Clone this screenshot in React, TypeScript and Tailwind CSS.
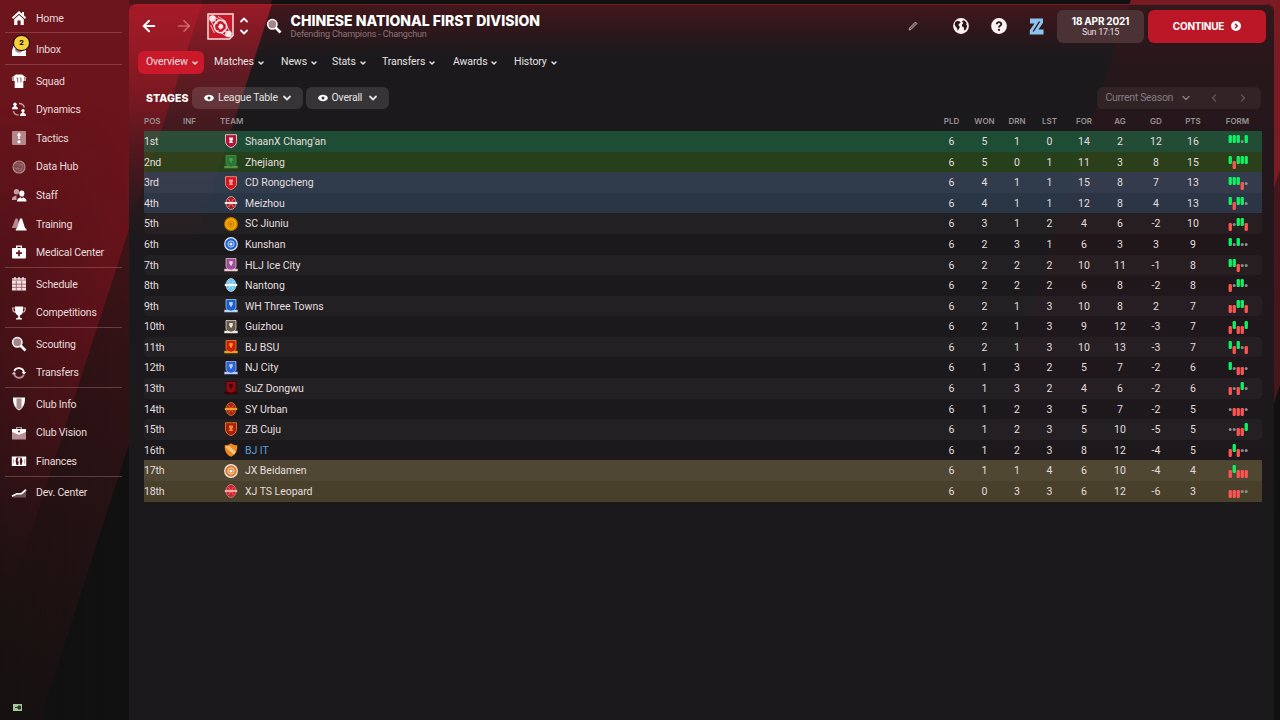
import React from "react";
import { ArrowLeft, ArrowRight, ChevronDown, ChevronLeft, ChevronRight, ChevronUp } from "lucide-react";

/* ── Sidebar icons ── */
const icons: Record<string, React.ReactNode> = {
  home: (
    <>
      <path d="M8 1 .8 7.600l1.300 1.400L8 3.700 13.900 9l1.300-1.400L13 5.600V2h-2v1.700z" />
      <path d="M3.200 9.200 8 5l4.800 4.200V15H9.600v-4.500H6.400V15H3.200z" />
    </>
  ),
  inbox: (
    <>
      <path d="M1 9.500 3 4h10l2 5.500V15H1z" />
      <path d="M4 9C5 12.500 11 12.500 12 9L11 5H5z" fill="#a98287" />
    </>
  ),
  squad: (
    <>
      <path d="M5 1.500h6L15.300 4.500 14.500 8H12.300v7H3.700V8H1.500L.7 4.500z" />
      <path d="M.7 4.500 3 3v5H1.500zM15.300 4.500 13 3v5h1.500z" fill="#b9959a" />
      <path d="M5.500 5h1.200v4.500M8.700 5h1.200v4.500" stroke="#8e4a51" strokeWidth=".9" fill="none" />
    </>
  ),
  dynamics: (
    <>
      <circle cx="4" cy="3.200" r="1.700" />
      <path d="M1 8.300c0-2 1-2.600 2.300-3V4h1.400v1.300C6 5.700 7 6.300 7 8.300z" />
      <circle cx="12" cy="9.700" r="1.700" />
      <path d="M9 15c0-2 1-2.800 2.300-3.200v-1.300h1.400v1.300C14 12.200 15 13 15 15z" />
      <path d="M8 2.500q4.500 0 5.300 4M2.500 10q.5 4 5 4" stroke="#c9a4a8" strokeWidth="1.300" fill="none" />
    </>
  ),
  tactics: (
    <>
      <rect x="1" y="1" width="14" height="14" rx="1" fill="#b4858a" />
      <circle cx="8" cy="11.800" r="1.600" />
      <path d="M8 2.500 10.300 5.500H8.800V9H7.200V5.500H5.700z" />
    </>
  ),
  data: (
    <>
      <circle cx="8" cy="8" r="6" fill="#83484f" stroke="#b78d92" strokeWidth="1.100" />
      <path d="M4 4.500 12 6l-2 6-5-2 6-5M3 9l8 1" stroke="#a5767c" strokeWidth=".6" fill="none" />
    </>
  ),
  staff: (
    <>
      <g fill="#c39da1">
        <circle cx="5.500" cy="4.800" r="2.700" />
        <path d="M.8 13c0-3 2-4 4.700-4.500V13z" />
      </g>
      <ellipse cx="10.800" cy="6.500" rx="2.600" ry="3.100" />
      <path d="M6 14.500c0-2.700 1.500-3.300 3.500-4.200l1.300 1.200 1.300-1.200c2 .9 3.400 1.500 3.400 4.200z" />
    </>
  ),
  training: (
    <>
      <path d="M4.500 2.500h2l3 9.500H.8z" fill="#b9868b" />
      <path d="M9 2.500h2l3 9.500 1.500 1v1.500H4.800V13L6.200 12z" />
    </>
  ),
  medical: (
    <>
      <path d="M5 4V1.500h6V4h3q1 0 1 1v8.500q0 1-1 1H2q-1 0-1-1V5q0-1 1-1zM6.300 4h3.400V2.700H6.300z" fillRule="evenodd" />
      <path d="M8 6.200v6M5 9.200h6" stroke="#6c151c" strokeWidth="1.800" />
    </>
  ),
  schedule: (
    <>
      <path d="M1 2h14v3H1z" fill="#c7a3a6" />
      <path d="M1 5h14v9.500H1z" fill="#f2e3e4" />
      <path d="M1 8.200h14M1 11.300h14M5.300 5v9.500M10.700 5v9.500" stroke="#9a5b62" strokeWidth=".9" />
      <path d="M4 1v2.500M8 1v2.500M12 1v2.500" stroke="#fff" strokeWidth="1.200" />
    </>
  ),
  trophy: (
    <>
      <path d="M4 1.500h8V6c0 2.800-1.800 4-3.200 4.400v2.100l2.200 1v1H5v-1l2.200-1v-2.100C5.800 10 4 8.800 4 6z" />
      <path d="M4 3H1.700c0 3 .8 4.300 3 4.300M12 3h2.300c0 3-.8 4.300-3 4.300" stroke="#d6b4b7" strokeWidth="1.200" fill="none" />
    </>
  ),
  scout: (
    <>
      <path d="m9.500 9.500 5 5" stroke="#fff" strokeWidth="2.600" />
      <circle cx="6.300" cy="6.300" r="4.700" fill="#a5858a" stroke="#fff" strokeWidth="1.500" />
    </>
  ),
  transfers: (
    <>
      <path d="M3.200 6a5.300 5.300 0 0 1 9.800 1" stroke="#fff" strokeWidth="1.700" fill="none" />
      <path d="M12.800 10a5.300 5.300 0 0 1-9.800-1" stroke="#b98c91" strokeWidth="1.700" fill="none" />
      <path d="M10.600 7h4.800L13 9.800z" />
      <path d="M.6 9.200 3 6.400l2.400 2.800z" fill="#d5b8bb" />
    </>
  ),
  club: (
    <>
      <path d="M2 1.500h12c.2 6-1.500 10.500-6 13-4.500-2.500-6.200-7-6-13z" />
      <path d="M5.500 2.500h5V12L8 13.500 5.500 12z" fill="#a98d90" />
    </>
  ),
  vision: (
    <>
      <path d="M5 4V2h6v2h4v10.500H1V4zm1.300 0h3.400V3H6.300z" fillRule="evenodd" fill="#b79094" />
      <path d="M1 4h14v3L8 9.800 1 7z" />
      <circle cx="8" cy="6.500" r="1" fill="#4c1318" />
    </>
  ),
  finances: (
    <>
      <path d="M.8 3.500h14.400v9.500H.8z" />
      <path d="M5.500 4.500h5L11.500 8l-1 4h-5l-1-4z" fill="#431217" />
      <path d="M7.500 4.500h2L8.700 8l.6 4h-2l.5-3.500-1.300-.3z" fill="#fff" />
      <path d="M2.300 6v4.500M13.700 6v4.500" stroke="#b79094" strokeWidth=".9" />
    </>
  ),
  dev: (
    <>
      <path d="M1 12.500h14V6L11 9.300 7 9.500z" fill="#6e5355" />
      <path d="M1 11.300 6 8.800l4.500-.2L15 4.800" stroke="#fff" strokeWidth="1.800" fill="none" />
    </>
  ),
};

const menu = [
  [["home", "Home"]],
  [["inbox", "Inbox"]],
  [
    ["squad", "Squad"],
    ["dynamics", "Dynamics"],
    ["tactics", "Tactics"],
    ["data", "Data Hub"],
    ["staff", "Staff"],
    ["training", "Training"],
    ["medical", "Medical Center"],
  ],
  [
    ["schedule", "Schedule"],
    ["trophy", "Competitions"],
  ],
  [
    ["scout", "Scouting"],
    ["transfers", "Transfers"],
  ],
  [
    ["club", "Club Info"],
    ["vision", "Club Vision"],
    ["finances", "Finances"],
  ],
  [["dev", "Dev. Center"]],
];

const tabs = [
  { label: "Overview", width: "w-[66px] mr-0.5" },
  { label: "Matches", width: "w-[67px]" },
  { label: "News", width: "w-[51px]" },
  { label: "Stats", width: "w-[50px]" },
  { label: "Transfers", width: "w-[71px]" },
  { label: "Awards", width: "w-[61px]" },
  { label: "History", width: "w-[60px]" },
];

/* ── Club crests ── */
type CrestShape = "shield" | "round" | "oval" | "base" | "sash";

interface Team {
  pos: string;
  name: string;
  crest: [CrestShape, string, string];
  stats: number[];
  form: string;
}

const teams: Team[] = [
  { pos: "1st", name: "ShaanX Chang'an", crest: ["shield", "#b5123a", "#f3e6ea"], stats: [6, 5, 1, 0, 14, 2, 12, 16], form: "WWWDW" },
  { pos: "2nd", name: "Zhejiang", crest: ["base", "#1f7a3c", "#5f9440"], stats: [6, 5, 0, 1, 11, 3, 8, 15], form: "WLWWW" },
  { pos: "3rd", name: "CD Rongcheng", crest: ["shield", "#d8141c", "#f6a096"], stats: [6, 4, 1, 1, 15, 8, 7, 13], form: "WWWLD" },
  { pos: "4th", name: "Meizhou", crest: ["oval", "#b01c22", "#f4e4e0"], stats: [6, 4, 1, 1, 12, 8, 4, 13], form: "WLWWD" },
  { pos: "5th", name: "SC Jiuniu", crest: ["round", "#f2a900", "#c47a00"], stats: [6, 3, 1, 2, 4, 6, -2, 10], form: "LDWWL" },
  { pos: "6th", name: "Kunshan", crest: ["round", "#1f5fd0", "#dce8fb"], stats: [6, 2, 3, 1, 6, 3, 3, 9], form: "WDWDD" },
  { pos: "7th", name: "HLJ Ice City", crest: ["base", "#9a4f9c", "#f2c8d4"], stats: [6, 2, 2, 2, 10, 11, -1, 8], form: "WWLDD" },
  { pos: "8th", name: "Nantong", crest: ["oval", "#6cc4ee", "#eef8fd"], stats: [6, 2, 2, 2, 6, 8, -2, 8], form: "LDWWD" },
  { pos: "9th", name: "WH Three Towns", crest: ["base", "#1c5fc8", "#b9d6fa"], stats: [6, 2, 1, 3, 10, 8, 2, 7], form: "LLWWL" },
  { pos: "10th", name: "Guizhou", crest: ["base", "#6b5a4c", "#ece8e2"], stats: [6, 2, 1, 3, 9, 12, -3, 7], form: "LWLLW" },
  { pos: "11th", name: "BJ BSU", crest: ["base", "#d01a12", "#f0a018"], stats: [6, 2, 1, 3, 10, 13, -3, 7], form: "WLWDL" },
  { pos: "12th", name: "NJ City", crest: ["base", "#2a62d8", "#b4ccf8"], stats: [6, 1, 3, 2, 5, 7, -2, 6], form: "WDLLD" },
  { pos: "13th", name: "SuZ Dongwu", crest: ["base", "#8e0c10", "#3a0406"], stats: [6, 1, 3, 2, 4, 6, -2, 6], form: "LDLWD" },
  { pos: "14th", name: "SY Urban", crest: ["oval", "#b3201c", "#e8a02c"], stats: [6, 1, 2, 3, 5, 7, -2, 5], form: "DLLLD" },
  { pos: "15th", name: "ZB Cuju", crest: ["shield", "#b41a14", "#e0902c"], stats: [6, 1, 2, 3, 5, 10, -5, 5], form: "DDLLW" },
  { pos: "16th", name: "BJ IT", crest: ["sash", "#f08a1c", "#fbe0b4"], stats: [6, 1, 2, 3, 8, 12, -4, 5], form: "LWLDD" },
  { pos: "17th", name: "JX Beidamen", crest: ["round", "#e07a2c", "#f4ece6"], stats: [6, 1, 1, 4, 6, 10, -4, 4], form: "LWLLL" },
  { pos: "18th", name: "XJ TS Leopard", crest: ["oval", "#d0202c", "#f0a8a4"], stats: [6, 0, 3, 3, 6, 12, -6, 3], form: "LLLDD" },
];

const rowColors: Record<number, string> = {
  0: "bg-[#217047]/60",
  1: "bg-[#2f5a1a]/60",
  2: "bg-[#415974]/55",
  3: "bg-[#344e69]/55",
  16: "bg-[#837649]/50",
  17: "bg-[#756839]/50",
};

const columns = ["PLD", "WON", "DRN", "LST", "FOR", "AG", "GD", "PTS"];
const gridCols =
  "grid grid-cols-[39px_37px_25px_1fr_33px_33px_32px_33px_36px_36px_36px_38px_50px] items-center";

function Crest({ crest }: { crest: Team["crest"] }) {
  const [shape, main, trim] = crest;
  return (
    <svg viewBox="0 0 14 14" className="size-[14px]">
      {shape === "shield" && (
        <>
          <path d="M1.500 .7h11v7c0 3-2.500 4.800-5.500 6-3-1.200-5.500-3-5.500-6z" fill={main} stroke={trim} strokeWidth=".8" />
          <path d="M5 3.500h4v2.300l-.8.700L9 9H5l.8-2.500-.8-.7z" fill={trim} />
        </>
      )}
      {shape === "sash" && (
        <>
          <path d="M.7 2.300C3 2.300 5.500 1.500 7 .2c1.500 1.300 4 2.100 6.300 2.100C13.500 8 11.500 12 7 13.800 2.500 12 .5 8 .7 2.300z" fill={main} />
          <path d="M2 3.500 10.500 11M4.500 3.300l7 6.200" stroke={trim} strokeWidth="1.100" />
        </>
      )}
      {shape === "round" && (
        <>
          <circle cx="7" cy="7" r="6.900" fill={trim} />
          <circle cx="7" cy="7" r="5.700" fill={main} />
          <circle cx="7" cy="7" r="3.100" fill="none" stroke={trim} strokeWidth=".9" />
          <circle cx="7" cy="7" r="1.600" fill={trim} />
        </>
      )}
      {shape === "oval" && (
        <>
          <ellipse cx="7" cy="7" rx="5" ry="6.500" fill={main} stroke={trim} strokeWidth=".6" />
          <path d="m4.500 3 5 8M9.500 3l-5 8" stroke={trim} strokeWidth=".5" />
          <path d="M.8 5.900h12.400v2.200H.8z" fill={trim} />
        </>
      )}
      {shape === "base" && (
        <>
          <path d="M2 .5h10v7.800c0 2-2 3.200-5 4.400-3-1.200-5-2.400-5-4.400z" fill={main} stroke={trim} strokeWidth=".7" />
          <path d="M5.300 3h3.400v3H8v1.500H6V6h-.7z" fill={trim} />
          <path d="M.3 10.800h3l3.700 1 3.700-1h3v2.500H.3z" fill={trim} />
        </>
      )}
    </svg>
  );
}

function Form({ form }: { form: string }) {
  return (
    <svg viewBox="0 0 20 20" className="ml-4 h-5 w-5">
      {form.split("").map((r, i) => {
        const x = i * 4 + 0.6;
        if (r === "D") return <circle key={i} cx={x + 1.6} cy="10.500" r="1.500" fill="#918c8f" />;
        return (
          <rect key={i} x={x} y={r === "W" ? 4 : 9} width="3.300" height="8" rx="1.200" fill={r === "W" ? "#10f064" : "#fb5453"} />
        );
      })}
    </svg>
  );
}

function Sidebar() {
  return (
    <nav className="relative w-[129px] shrink-0 pt-[3.600px]">
      {menu.map((group, g) => (
        <div key={g}>
          {g > 0 && <div className="ml-[5px] h-[2.900px] w-[117px] border-t border-[#b06a70]/45" />}
          {group.map(([icon, label]) => (
            <div key={label} className="flex h-[28.600px] items-center pl-[11px]">
              <div className="relative">
                <svg viewBox="0 0 16 16" className="size-4" fill="#fff">
                  {icons[icon]}
                </svg>
                {icon === "inbox" && (
                  <span className="absolute -top-[6px] left-[2px] flex h-4 w-[17px] items-center justify-center rounded-full border-[1.500px] border-black bg-[#f6cf3c] text-[8px] font-bold text-black">
                    2
                  </span>
                )}
              </div>
              <span className="ml-[9px] pt-0.5 tracking-[-0.170px] whitespace-nowrap text-[#e9dcdd]">{label}</span>
            </div>
          ))}
        </div>
      ))}
      <svg viewBox="0 0 9 7" className="absolute top-[704px] left-[12.500px] h-[7px] w-[9px]">
        <path d="M0 0h9v7H0z" fill="#a9c79d" />
        <path d="M2 3.500h3M5 2h2.500v3H5z" stroke="#25401f" strokeWidth="1" fill="#25401f" />
      </svg>
    </nav>
  );
}

function Header() {
  return (
    <header className="flex h-[44px] items-center pr-[8px] pl-[10.500px] text-white">
      <ArrowLeft className="size-[18px]" strokeWidth={2.6} />
      <ArrowRight className="ml-[17px] size-[18px] text-[#d9777d]/80" strokeWidth={2.3} />
      <svg viewBox="0 0 27 27" className="ml-[14px] size-[27px]">
        <path d="M1 1h25v21.500L22.500 26H1z" fill="#c8192b" stroke="#f6dfe1" strokeWidth="1.500" />
        <path d="m6 3.500 10 5M4.500 5.500l9 6M4 8l5 9M11 18l9 5.500M17 17l5 4M18 10l5 9M11 3.500l8 5M3.500 12l4 8" stroke="#f3cdd0" strokeWidth="1" />
        <circle cx="5.500" cy="5.500" r="3.300" fill="#f9e8e9" />
        <circle cx="21.500" cy="21" r="3.300" fill="#f9e8e9" />
        <circle cx="13.500" cy="13.500" r="6.200" fill="#c8192b" stroke="#f9e8e9" strokeWidth="1.500" />
        <path d="m13 11 2.500 1 .3 2.500-2.300 1.500-2-1.800zM9.500 11l1-1.500M16.500 9.500l1 1M10.500 17l1 1M17.500 16.500l-1 1" fill="#f9e8e9" stroke="#f9e8e9" strokeWidth="1" />
      </svg>
      <div className="ml-[4px] flex flex-col">
        <ChevronUp className="size-3" strokeWidth={3.6} />
        <ChevronDown className="size-3" strokeWidth={3.6} />
      </div>
      <svg viewBox="0 0 16 16" className="ml-[16.500px] size-4">{icons.scout}</svg>
      <div className="ml-[8.500px]">
        <h1 className="font-[Inter] text-[14px] leading-[16px] font-extrabold tracking-[0.020px] whitespace-nowrap">
          CHINESE NATIONAL FIRST DIVISION
        </h1>
        <p className="text-[9px] leading-[11px] tracking-[-0.150px] text-[#8d7578]">Defending Champions - Changchun</p>
      </div>
      <div className="ml-auto flex items-center">
        <svg viewBox="0 0 10 10" className="size-[10px]">
          <path d="M1 9 1.500 7 7.500 1 9 2.500 3 8.500z" fill="#6b5a5b" stroke="#b9a9aa" strokeWidth=".9" />
        </svg>
        <svg viewBox="0 0 16 16" className="ml-[35px] size-4">
          <circle cx="8" cy="8" r="7.900" fill="#fff1f1" />
          <path d="M2.200 4 4.500 2.800l2.300.7.8 1.300-1.500 1-.8 1.500 1.500 1.200-.3 1.500-1 1.500-.8 1.300-.7-2.500-1.500-2L1.600 6.500zM9 3.200l1.500-.9 1.500.7 1.700 2-.5 1.500 1 1.200-.7 2.500-1.500 2.300-1-.5-.2-2.500-1.800-1.200L9 6.500l1.200-1.200z" fill="#2b1619" />
        </svg>
        <svg viewBox="0 0 16 16" className="ml-[22px] size-4">
          <circle cx="8" cy="8" r="7.900" fill="#fff1f1" />
          <path d="M5.700 6.300C5.700 3.400 10.400 3.500 10.300 6.200 10.200 7.800 8 7.900 8 9.500" stroke="#2b1619" strokeWidth="1.900" fill="none" />
          <circle cx="8" cy="11.900" r="1.100" fill="#2b1619" />
        </svg>
        <svg viewBox="0 0 15 17" className="ml-[22.500px] h-[17px] w-[15px]">
          <path d="M1 .5h13v4.300L9.500 11.500H14.500v5H.8v-4.300L5.500 5.500H1z" fill="#8cc4f0" />
          <path d="M11.300 3.500h-1.500L3.500 13.500H5z" fill="#241519" />
        </svg>
        <div className="ml-[13px] flex h-[33px] w-[87px] flex-col items-center justify-center rounded-md bg-[#4b3235]">
          <span className="font-[Inter] text-[10px] leading-3 font-bold tracking-[-0.220px]">18 APR 2021</span>
          <span className="text-[9px] leading-[11px] tracking-[-0.300px] text-[#eadfe0]">Sun 17:15</span>
        </div>
        <button className="ml-[4px] flex h-[33px] w-[118px] items-center justify-center gap-[7px] rounded-md bg-[#bb1727] font-[Inter] text-[10px] font-bold tracking-[-0.240px]">
          CONTINUE
          <svg viewBox="0 0 10 10" className="size-[10px]">
            <circle cx="5" cy="5" r="5" fill="#fff" />
            <path d="M4 2.700 6.300 5 4 7.300" stroke="#bb1727" strokeWidth="1.500" fill="none" />
          </svg>
        </button>
      </div>
    </header>
  );
}

function Eye() {
  return (
    <svg viewBox="0 0 10 8" className="h-2 w-[10px]">
      <path d="M0 4C1.500-.3 8.500-.3 10 4 8.500 8.300 1.500 8.300 0 4z" fill="#fff" />
      <circle cx="5" cy="4" r="1.500" fill="#3a3739" />
    </svg>
  );
}

function Filters() {
  return (
    <div className="mt-[13px] flex h-[23px] items-center pr-[13.500px] pl-[17px] tracking-[-0.180px] text-[#e4e0e1]">
      <span className="w-[46px] pt-[3px] font-[Inter] text-[10.500px] font-extrabold tracking-[0.100px] text-white">STAGES</span>
      <button className="flex h-[22.500px] w-[110.500px] items-center rounded-md bg-white/12 pl-[11.500px]">
        <Eye />
        <span className="ml-[4.500px] whitespace-nowrap">League Table</span>
        <ChevronDown className="mr-[10px] ml-auto size-3" strokeWidth={3.6} />
      </button>
      <button className="ml-[3.500px] flex h-[22.500px] w-[83px] items-center rounded-md bg-white/12 pl-[11.500px]">
        <Eye />
        <span className="ml-[4px]">Overall</span>
        <ChevronDown className="mr-[10px] ml-auto size-3" strokeWidth={3.6} />
      </button>
      <div className="ml-auto flex h-[22.500px] w-[164px] items-center rounded-md bg-white/5 pl-[9px] text-[#867c7f]">
        <span className="w-[74px] tracking-[-0.300px] whitespace-nowrap">Current Season</span>
        <ChevronDown className="size-3" strokeWidth={3} />
        <ChevronLeft className="ml-[16.500px] size-3 text-[#5d5356]" strokeWidth={3} />
        <ChevronRight className="ml-[16.500px] size-3 text-[#5d5356]" strokeWidth={3} />
      </div>
    </div>
  );
}

function LeagueTable() {
  return (
    <div className="mr-[12px] ml-[15px] text-[#e2dede]">
      <div className={`${gridCols} h-[21.600px] pt-[2px] font-[Inter] text-[8px] font-semibold text-[#989093]`}>
        <span>POS</span>
        <span>INF</span>
        <span className="col-span-2">TEAM</span>
        {columns.map((c) => (
          <span key={c} className="text-center">
            {c}
          </span>
        ))}
        <span className="pl-px text-center">FORM</span>
      </div>
      {teams.map((team, i) => (
        <div
          key={team.name}
          className={`${gridCols} h-[20.590px] ${rowColors[i] ?? (i % 2 === 0 ? "rounded bg-white/[0.030]" : "")}`}
        >
          <span className="pt-0.5 tracking-[-0.200px]">{team.pos}</span>
          <span />
          <span className="pl-1">
            <Crest crest={team.crest} />
          </span>
          <span className={`pt-0.5 tracking-[-0.040px] whitespace-nowrap ${team.name === "BJ IT" ? "text-[#5b9fd8]" : ""}`}>
            {team.name}
          </span>
          {team.stats.map((s, j) => (
            <span key={j} className="pt-0.5 text-center">
              {s}
            </span>
          ))}
          <Form form={team.form} />
        </div>
      ))}
    </div>
  );
}

export default function App() {
  return (
    <div className="relative flex h-[720px] w-[1280px] overflow-hidden bg-[#111111] font-[Roboto,sans-serif] text-[10.500px] leading-none">
      {/* Angled club-colour bands behind the shell */}
      <div className="absolute inset-0 bg-linear-to-b from-[#5a151b] via-[#321215] via-50% to-[#171111] [clip-path:polygon(0_0,272px_0,40px_720px,0_720px)]" />
      <div className="absolute inset-0 bg-[linear-gradient(180deg,#6c151c_0,#68131b_235px,#61121a_330px,#4a1318_430px,#2e1215_530px,#1b1112_628px)] [clip-path:polygon(0_0,203px_0,0_628px)]" />
      <div className="absolute inset-y-0 left-0 w-[128px] bg-linear-to-r from-[#141111]/35 to-transparent [mask-image:linear-gradient(180deg,transparent_100px,black_300px)]" />
      {/* Slightly darker strip above the panel */}
      <div className="absolute top-0 left-[129px] h-1 w-[150px] bg-[#111111]/35" />
      <div className="absolute inset-0 bg-[#45161c] [clip-path:polygon(1200px_0,1280px_0,1280px_385px,1270px_415px)]" />
      <div className="absolute inset-0 bg-[#7a1a22] [clip-path:polygon(1131px_0,1280px_0,1280px_170px,1270px_200px,1270px_5px,1129px_5px)]" />

      <Sidebar />

      <main className="relative mt-1 h-[716px] w-[1145px] overflow-hidden rounded-t-lg bg-[#1b191c]">
        <div className="absolute inset-0 bg-[linear-gradient(180deg,#44171c_0,#31171b_22px,#1b191c_52px)]" />
        <div className="absolute inset-0 bg-[linear-gradient(180deg,#33171b_0,#27171b_60px,#21171b_220px,#1b191c_520px)] [clip-path:polygon(1000px_0,1145px_0,1145px_716px,770px_716px)]" />
        <div className="absolute inset-0 bg-[linear-gradient(180deg,#9a1a26_0,#741a23_45px,#511b21_95px,#33191d_150px,#1b191c_240px)] [clip-path:polygon(0_0,143px_0,0_444px)]" />
        <div className="absolute inset-0 bg-[linear-gradient(180deg,#a81a28_0,#941a25_45px,#781821_95px,#4f171d_150px,#1f191c_220px)] [clip-path:polygon(0_0,73px_0,0_226px)]" />
        <div className="absolute inset-x-0 top-0 h-3 rounded-t-lg border-t border-[#a8202c]/50" />
        <div className="relative">
          <Header />
          <div className="mt-[2.500px] flex h-[23px] pl-[9px] text-[#e6e1e2]">
            {tabs.map(({ label, width }, i) => (
              <div key={label} className={`flex items-center gap-[3px] rounded-md pt-px pl-2 tracking-[-0.100px] ${width} ${i === 0 ? "bg-[#cb182b]" : ""}`}>
                {label}
                <ChevronDown className="size-2" strokeWidth={4.5} />
              </div>
            ))}
          </div>
          <Filters />
          <LeagueTable />
        </div>
      </main>
    </div>
  );
}
